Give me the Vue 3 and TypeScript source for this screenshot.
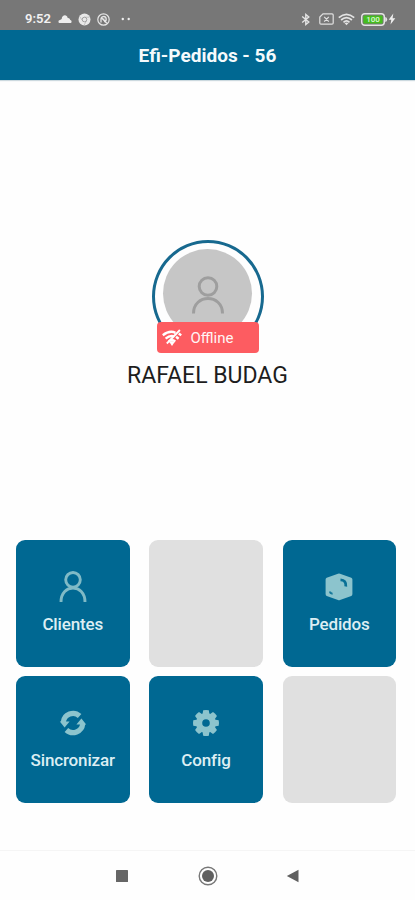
<script setup lang="ts">
type TileIcon = 'user' | 'box' | 'sync' | 'gear'

interface Tile {
  id: number
  label?: string
  icon?: TileIcon
}

const tiles: Tile[] = [
  { id: 1, label: 'Clientes', icon: 'user' },
  { id: 2 },
  { id: 3, label: 'Pedidos', icon: 'box' },
  { id: 4, label: 'Sincronizar', icon: 'sync' },
  { id: 5, label: 'Config', icon: 'gear' },
  { id: 6 },
]

const gearAngles: number[] = [0, 45, 90, 135, 180, 225, 270, 315]
</script>

<template>
  <div class="screen">
    <div class="status">
      <div class="status-left">
        <span class="clock">9:52</span>
        <svg class="cloud" width="14" height="9" viewBox="0 0 14 9"><path d="M1.8 8C0 8 0 5.3 2 5.1C2.6 4.2 3.2 4.2 3.7 3.9C4-.7 9.2-.8 9.7 3C12 2.9 12 4.8 12.2 5C14 5.3 14 8 12.3 8Z" fill="#eee" /></svg>
        <svg class="chrome" width="13" height="13" viewBox="0 0 13 13">
          <circle cx="6.5" cy="6.5" r="6" fill="#e8e8e8" />
          <circle cx="6.5" cy="6.5" r="2.3" fill="none" stroke="#999" stroke-width=".9" />
          <path d="M6.5 4.2H11.5M4.5 7.6L2 4M8.5 7.6L6.2 12" stroke="#aaa" stroke-width=".6" />
        </svg>
        <svg class="at" width="13" height="13" viewBox="0 0 13 13" fill="none" stroke="#e6e6e6">
          <circle cx="6.5" cy="6.5" r="5.7" stroke-width="1.2" />
          <path d="M4 9.4V6.2A2.6 2.6 0 1 1 7 8.7M4 4.2L9.8 10.2M6 6.2H7.5" stroke-width="1.3" />
        </svg>
        <svg class="dots" width="10" height="4" viewBox="0 0 10 4" fill="#eee"><circle cx="1.8" cy="2" r="1.2" /><circle cx="7.7" cy="2" r="1.2" /></svg>
      </div>
      <div class="status-right">
        <svg width="10" height="13" viewBox="0 0 10 13" fill="none" stroke="#e4e4e4" stroke-width="1.4"><path d="M1.2 3.5L7.8 9L4.8 11.5V1.5L7.8 4L1.2 9.5" /></svg>
        <svg class="sim" width="15" height="12" viewBox="0 0 15 12" fill="none" stroke="#e0e0e0" stroke-width="1.2"><path d="M4 .8H13Q14.2.8 14.2 2V10Q14.2 11.2 13 11.2H2Q.8 11.2.8 10V4ZM5.2 3.8L9.8 8.6M9.8 3.8L5.2 8.6" /></svg>
        <svg class="wifi" width="17" height="13" viewBox="0 0 17 13" fill="none" stroke="#e4e4e4" stroke-width="1.7"><path d="M.8 4.6Q8.5-2 16.2 4.6M3.1 7Q8.5 2.2 13.9 7M5.5 9.3Q8.5 6.6 11.5 9.3" /><path d="M6.5 10Q8.5 8.8 10.5 10L8.5 12.3Z" fill="#e4e4e4" stroke="none" /></svg>
        <svg class="battery" width="27" height="13" viewBox="0 0 27 13">
          <rect x=".7" y=".7" width="22.6" height="11.6" rx="3" fill="#777" stroke="#e5e5e5" stroke-width="1.4" />
          <rect x="2.4" y="2.4" width="19.2" height="8.2" rx="1.2" fill="#45bd20" />
          <path d="M24.2 4Q26.2 4.2 26.2 6.5T24.2 9Z" fill="#e5e5e5" />
          <text x="12" y="9.4" text-anchor="middle" font-size="8" font-weight="600" fill="#d9f7cf">100</text>
        </svg>
        <svg class="bolt" width="8" height="12" viewBox="0 0 8 12"><path d="M5.3.5L.7 6.8H3.3L2.5 11.5L7.3 5.2H4.6Z" fill="#eee" /></svg>
      </div>
    </div>
    <header class="header">Efi-Pedidos - 56</header>
    <main class="main">
      <section class="profile">
        <div class="ring">
          <div class="avatar">
            <svg width="34" height="40" viewBox="0 0 34 40" fill="none" stroke="#9e9e9e" stroke-width="3"><circle cx="17" cy="10.5" r="8.8" /><path d="M2.5 37.5C2.5 17.5 31.5 17.5 31.5 37.5" /></svg>
          </div>
          <div class="badge">
            <svg width="20" height="18" viewBox="0 0 20 18" fill="none" stroke="#fff" stroke-width="2.4"><path d="M.8 6.3Q7.5 1 13.5 3.8M3.6 9.6Q8 6 12 7.4M16.8 4.5L19.2 6.4M6.6 12.6Q9.8 10 13.3 12.5M14.1 7.8L16.6 9.8" /><path d="M17.9 1L4.8 14.5" stroke-width="1.8" /><path d="M7.5 13.2Q10 11.2 12.5 13.2L10 17Z" fill="#fff" stroke="none" /></svg>
            <span>Offline</span>
          </div>
        </div>
        <div class="name">RAFAEL BUDAG</div>
      </section>
      <section class="grid">
        <div v-for="tile in tiles" :key="tile.id" class="tile" :class="{ empty: !tile.icon }">
          <template v-if="tile.icon">
            <svg v-if="tile.icon === 'user'" class="icon" viewBox="0 0 32 32" fill="none" stroke="#7fbac6" stroke-width="2.9"><circle cx="16" cy="8.8" r="7.3" /><path d="M4 31C4 12.3 28 12.3 28 31" /></svg>
            <svg v-else-if="tile.icon === 'box'" class="icon" viewBox="0 0 32 32">
              <path d="M15 2.7Q16 2.1 17 2.7L28.3 6.7Q29.4 7.2 29.4 8.5V23Q29.4 24.5 28.3 25L17 29Q16 29.4 15 29L3.7 25Q2.6 24.5 2.6 23V8.5Q2.6 7.2 3.7 6.7Z" fill="#8cc4cd" />
              <path d="M17.5 8.8Q23.4 9 22.8 15.5" fill="none" stroke="#087096" stroke-width="2.8" />
              <path d="M7 20.6Q7 22.6 9.6 22.7" fill="none" stroke="#16799b" stroke-width="1.9" />
            </svg>
            <svg v-else-if="tile.icon === 'sync'" class="icon" viewBox="0 0 32 32">
              <path d="M6.3 15.2A9.7 9.7 0 0 1 22.6 9M25.7 16.8A9.7 9.7 0 0 1 9.4 23" fill="none" stroke="#8cc4cd" stroke-width="5.2" />
              <path d="M2.8 14.6H12.6L7.6 20.4ZM29.2 17.4H19.4L24.4 11.6Z" fill="#8cc4cd" />
            </svg>
            <svg v-else class="icon" viewBox="0 0 32 32">
              <g fill="#8cc4cd"><path v-for="angle in gearAngles" :key="angle" d="M12.4 8L13.2 3.3Q16 2.7 18.8 3.3L19.6 8Z" :transform="`rotate(${angle} 16 16)`" /></g>
              <circle cx="16" cy="16" r="6.9" fill="none" stroke="#8cc4cd" stroke-width="6.2" />
            </svg>
            <span class="label">{{ tile.label }}</span>
          </template>
        </div>
      </section>
    </main>
    <nav class="nav">
      <svg width="14" height="14" viewBox="0 0 14 14"><rect x="1" y="1" width="12" height="12" rx=".6" fill="#666" /></svg>
      <svg width="20" height="20" viewBox="0 0 20 20"><circle cx="10" cy="10" r="8.8" fill="none" stroke="#777" stroke-width="1.4" /><circle cx="10" cy="10" r="6" fill="#606060" /></svg>
      <svg width="14" height="14" viewBox="0 0 14 14"><path d="M.8 7L12.5.7V13.3Z" fill="#606060" /></svg>
    </nav>
  </div>
</template>

<style>
body {
  margin: 0;
  background: #fefefe;
}
</style>

<style scoped>
.screen {
  width: 415px;
  height: 900px;
  display: flex;
  flex-direction: column;
  overflow: hidden;
  font-family: Roboto, "Liberation Sans", sans-serif;
  background: #fefefe;
}
svg {
  display: block;
  flex: none;
}
.status {
  height: 30px;
  flex: none;
  box-sizing: border-box;
  padding: 8px 18px 0 25px;
  display: flex;
  justify-content: space-between;
  background: #777;
}
.status-left,
.status-right {
  height: 22px;
  display: flex;
  align-items: center;
}
.clock {
  width: 33px;
  font-size: 13px;
  line-height: 22px;
  font-weight: 600;
  color: #f2f2f2;
}
.chrome { margin-left: 6px; }
.at { margin-left: 6px; }
.dots { margin-left: 11px; }
.sim { margin-left: 8px; }
.wifi { margin-left: 4px; }
.battery { margin-left: 6px; }
.bolt { margin-left: 0; }
.status-right {
  padding-right: 1px;
}
.header {
  height: 50px;
  flex: none;
  box-sizing: border-box;
  padding-top: 1px;
  text-align: center;
  font-size: 19px;
  line-height: 49px;
  font-weight: 700;
  color: #f5fafc;
  background: #006892;
  box-shadow: 0 1px 1px #ccd9df;
}
.main {
  height: 770px;
  flex: none;
  box-sizing: border-box;
  padding: 160px 19px 0 16px;
}
.profile {
  height: 299.5px;
  box-sizing: border-box;
  padding-left: 3px;
  display: flex;
  flex-direction: column;
  align-items: center;
}
.ring {
  position: relative;
  width: 112px;
  height: 113px;
  box-sizing: border-box;
  border: 3px solid #17698f;
  border-radius: 50%;
  display: flex;
  justify-content: center;
  align-items: flex-start;
  padding-top: 6px;
}
.avatar {
  width: 89px;
  height: 89px;
  border-radius: 50%;
  background: #c6c6c6;
  display: flex;
  justify-content: center;
  padding-top: 27px;
  box-sizing: border-box;
}
.badge {
  position: absolute;
  left: 2px;
  top: 79px;
  width: 102px;
  height: 31px;
  box-sizing: border-box;
  padding-left: 5px;
  display: flex;
  align-items: center;
  gap: 9px;
  border-radius: 4px;
  background: #fd5c61;
  color: #fff5f5;
  font-size: 15px;
}
.name {
  margin-top: 8px;
  font-size: 23px;
  line-height: 30px;
  white-space: nowrap;
  color: #1d1d1d;
}
.grid {
  display: grid;
  grid-template-columns: repeat(3, 113.5px);
  grid-auto-rows: 127px;
  justify-content: space-between;
  row-gap: 9.5px;
}
.tile {
  border-radius: 9px;
  background: #006892;
  display: flex;
  flex-direction: column;
  align-items: center;
  padding-top: 31px;
  box-sizing: border-box;
}
.empty {
  background: #e0e0e0;
}
.icon {
  width: 32px;
  height: 32px;
}
.label {
  margin-top: 9px;
  font-size: 17px;
  line-height: 24px;
  letter-spacing: -0.15px;
  font-weight: 500;
  color: #dceef3;
}
.nav {
  height: 50px;
  flex: none;
  box-sizing: border-box;
  border-top: 1px solid #f5f5f5;
  padding: 0 115px;
  display: flex;
  align-items: center;
  justify-content: space-between;
}
</style>
